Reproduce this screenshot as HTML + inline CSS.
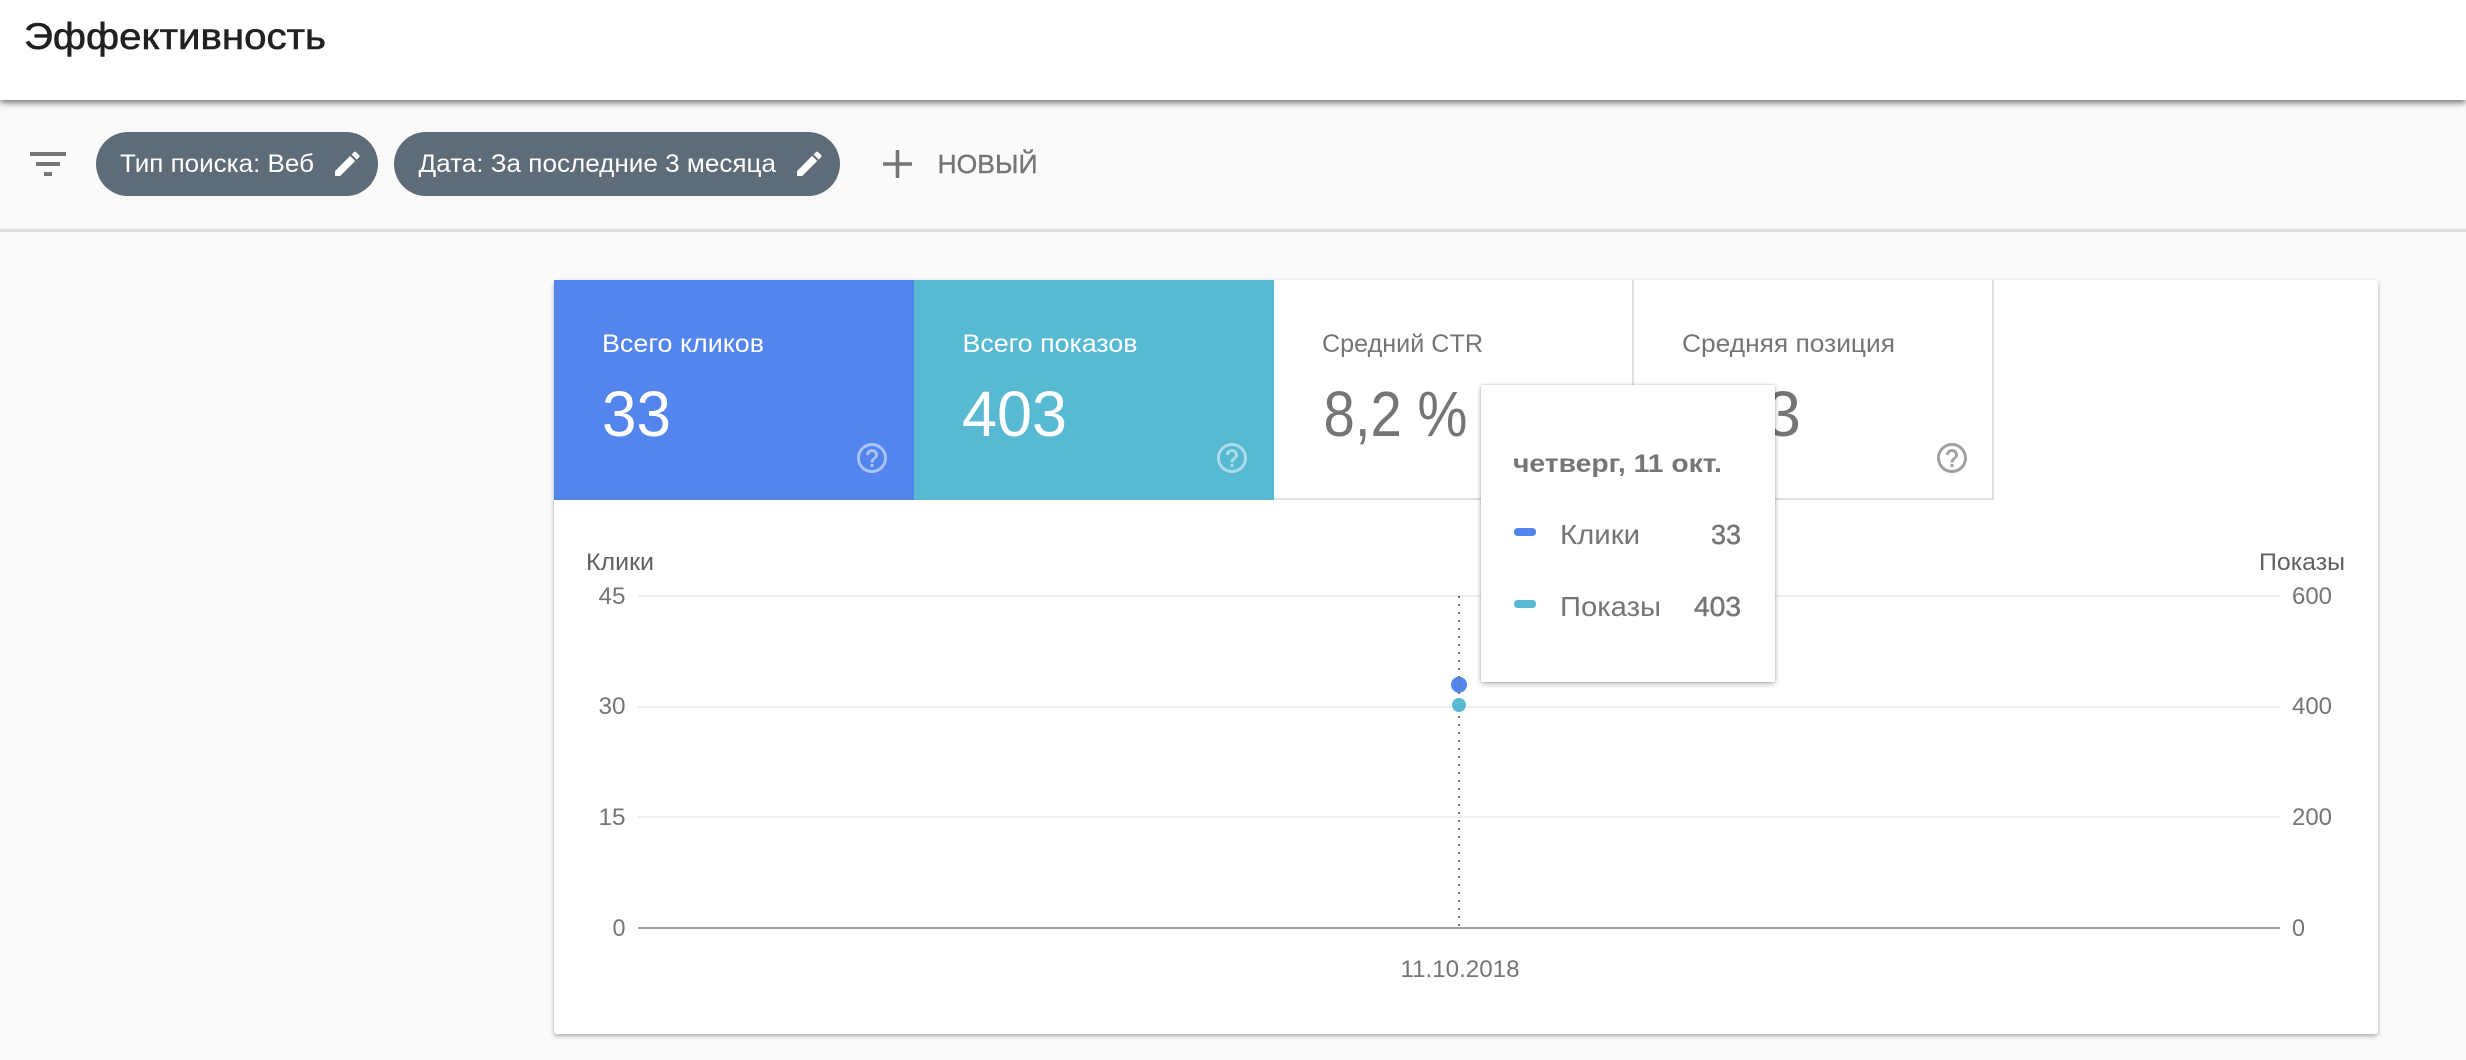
<!DOCTYPE html>
<html lang="ru">
<head>
<meta charset="utf-8">
<title>Эффективность</title>
<style>
html,body{margin:0;padding:0;width:2466px;height:1060px;overflow:hidden;background:#fafafa;font-family:"Liberation Sans",sans-serif}
.abs{position:absolute}
#hdr{left:0;top:0;width:2466px;height:100px;background:#fff;box-shadow:0 3px 6px rgba(0,0,0,.5)}
#div{left:0;top:229px;width:2466px;height:3px;background:#dedede}
.chip{background:#5d6c78;border-radius:32px;height:64px;top:132px}
#card{left:554px;top:280px;width:1824px;height:754px;background:#fff;border-radius:3px;box-shadow:0 2px 5px rgba(0,0,0,.32)}
#t1{left:554px;top:280px;width:360px;height:220px;background:#5485ec}
#t2{left:914px;top:280px;width:360px;height:220px;background:#58b9d2}
#t3{left:1274px;top:280px;width:358px;height:218px;border-right:2px solid #e0e0e0;border-bottom:2px solid #e0e0e0}
#t4{left:1634px;top:280px;width:358px;height:218px;border-right:2px solid #e0e0e0;border-bottom:2px solid #e0e0e0}
#tip{left:1481px;top:385px;width:294px;height:297px;background:#fff;border-radius:2px;box-shadow:0 2px 6px rgba(0,0,0,.28),0 0 2px rgba(0,0,0,.2)}
svg{position:absolute;left:0;top:0}
text{font-family:"Liberation Sans",sans-serif}
.g{fill:#757575}
.d{fill:#616161}
.w{fill:#fff}
</style>
</head>
<body>
<div class="abs" id="hdr"></div>
<div class="abs" id="div"></div>
<div class="abs chip" style="left:96px;width:282px"></div>
<div class="abs chip" style="left:394px;width:446px"></div>
<div class="abs" id="card"></div>
<div class="abs" id="t1"></div>
<div class="abs" id="t2"></div>
<div class="abs" id="t3"></div>
<div class="abs" id="t4"></div>

<svg width="2466" height="1060" viewBox="0 0 2466 1060" style="z-index:1">
  <!-- title -->
  <text x="24" y="49" font-size="37.500" fill="#212121" stroke="#212121" stroke-width=".6" textLength="302" lengthAdjust="spacingAndGlyphs">Эффективность</text>

  <!-- filter icon -->
  <path fill="#757575" d="M30 152h36v4H30zM36 162h24v4H36zM44 172h8v4h-8z"/>

  <!-- chips -->
  <text x="120" y="172" font-size="25" class="w" textLength="194" lengthAdjust="spacingAndGlyphs">Тип поиска: Веб</text>
  <path transform="translate(331 147.500) scale(1.36)" fill="#fff" d="M3 17.25V21h3.75L17.810 9.940l-3.750-3.750L3 17.250zM20.710 7.040c.39-.39.39-1.020 0-1.410l-2.340-2.340c-.39-.39-1.020-.39-1.410 0l-1.830 1.830 3.750 3.750 1.830-1.830z"/>
  <text x="418.500" y="172" font-size="25" class="w" textLength="357.500" lengthAdjust="spacingAndGlyphs">Дата: За последние 3 месяца</text>
  <path transform="translate(793 147.500) scale(1.36)" fill="#fff" d="M3 17.25V21h3.75L17.810 9.940l-3.750-3.750L3 17.250zM20.710 7.040c.39-.39.39-1.020 0-1.410l-2.340-2.340c-.39-.39-1.020-.39-1.410 0l-1.830 1.830 3.750 3.750 1.830-1.830z"/>

  <!-- add new -->
  <path fill="#757575" d="M895.700 150h3.600v12.200h12.700v3.600h-12.700V178h-3.600v-12.200H883v-3.600h12.700z"/>
  <text x="937.500" y="173" font-size="26" class="g" stroke="#757575" stroke-width=".4" textLength="100" lengthAdjust="spacingAndGlyphs">НОВЫЙ</text>

  <!-- tiles -->
  <text x="602" y="352" font-size="25" class="w" textLength="162" lengthAdjust="spacingAndGlyphs">Всего кликов</text>
  <text x="602" y="436" font-size="64" class="w" textLength="69" lengthAdjust="spacingAndGlyphs">33</text>
  <path transform="translate(854 440) scale(1.5)" fill="#fff" fill-opacity=".5" d="M11 18h2v-2h-2v2zm1-16C6.480 2 2 6.480 2 12s4.480 10 10 10 10-4.480 10-10S17.520 2 12 2zm0 18c-4.410 0-8-3.590-8-8s3.590-8 8-8 8 3.590 8 8-3.590 8-8 8zm0-14c-2.210 0-4 1.790-4 4h2c0-1.100.9-2 2-2s2 .9 2 2c0 2-3 1.750-3 5h2c0-2.250 3-2.500 3-5 0-2.210-1.790-4-4-4z"/>

  <text x="962.500" y="352" font-size="25" class="w" textLength="175" lengthAdjust="spacingAndGlyphs">Всего показов</text>
  <text x="962" y="436" font-size="64" class="w" textLength="105" lengthAdjust="spacingAndGlyphs">403</text>
  <path transform="translate(1214 440) scale(1.5)" fill="#fff" fill-opacity=".5" d="M11 18h2v-2h-2v2zm1-16C6.480 2 2 6.480 2 12s4.480 10 10 10 10-4.480 10-10S17.520 2 12 2zm0 18c-4.410 0-8-3.590-8-8s3.590-8 8-8 8 3.590 8 8-3.590 8-8 8zm0-14c-2.210 0-4 1.790-4 4h2c0-1.100.9-2 2-2s2 .9 2 2c0 2-3 1.750-3 5h2c0-2.250 3-2.500 3-5 0-2.210-1.790-4-4-4z"/>

  <text x="1322" y="352" font-size="25" class="g" textLength="161" lengthAdjust="spacingAndGlyphs">Средний CTR</text>
  <text x="1323.500" y="436" font-size="64" class="g" textLength="144" lengthAdjust="spacingAndGlyphs">8,2 %</text>

  <text x="1682" y="352" font-size="25" class="g" textLength="213" lengthAdjust="spacingAndGlyphs">Средняя позиция</text>
  <text x="1801" y="436" font-size="64" class="g" text-anchor="end">3</text>
  <path transform="translate(1934 440) scale(1.5)" fill="#a0a0a0" d="M11 18h2v-2h-2v2zm1-16C6.480 2 2 6.480 2 12s4.480 10 10 10 10-4.480 10-10S17.520 2 12 2zm0 18c-4.410 0-8-3.590-8-8s3.590-8 8-8 8 3.590 8 8-3.590 8-8 8zm0-14c-2.210 0-4 1.790-4 4h2c0-1.100.9-2 2-2s2 .9 2 2c0 2-3 1.750-3 5h2c0-2.250 3-2.500 3-5 0-2.210-1.790-4-4-4z"/>

  <!-- chart grid -->
  <g fill="#eeeeee">
    <rect x="638" y="595" width="1642" height="2"/>
    <rect x="638" y="706" width="1642" height="2"/>
    <rect x="638" y="816" width="1642" height="2"/>
  </g>
  <rect x="638" y="927" width="1642" height="2" fill="#9e9e9e"/>

  <!-- axis labels -->
  <text x="586" y="570" font-size="24" class="d" textLength="68" lengthAdjust="spacingAndGlyphs">Клики</text>
  <text x="2259" y="570" font-size="24" class="d" textLength="86" lengthAdjust="spacingAndGlyphs">Показы</text>
  <g font-size="24" class="g">
    <text x="598.500" y="604" textLength="27" lengthAdjust="spacingAndGlyphs">45</text>
    <text x="598.500" y="714" textLength="27" lengthAdjust="spacingAndGlyphs">30</text>
    <text x="598.500" y="825" textLength="27" lengthAdjust="spacingAndGlyphs">15</text>
    <text x="612.500" y="936" textLength="13" lengthAdjust="spacingAndGlyphs">0</text>
  </g>
  <g font-size="24" class="g">
    <text x="2292" y="604" textLength="40" lengthAdjust="spacingAndGlyphs">600</text>
    <text x="2292" y="714" textLength="40" lengthAdjust="spacingAndGlyphs">400</text>
    <text x="2292" y="825" textLength="40" lengthAdjust="spacingAndGlyphs">200</text>
    <text x="2292" y="936" textLength="13" lengthAdjust="spacingAndGlyphs">0</text>
  </g>
  <text x="1400.500" y="977" font-size="24" class="g" textLength="119" lengthAdjust="spacingAndGlyphs">11.10.2018</text>

  <!-- chart markers -->
  <circle cx="1459" cy="684.700" r="8" fill="#5485ec"/>
  <line x1="1459" y1="596" x2="1459" y2="927" stroke="#757575" stroke-width="2" stroke-dasharray="2 6"/>
  <circle cx="1459" cy="705" r="8" fill="#fff"/>
  <circle cx="1459" cy="705" r="7" fill="#58b9d2"/>
</svg>

<div class="abs" id="tip" style="z-index:2"></div>
<svg width="2466" height="1060" viewBox="0 0 2466 1060" style="z-index:3">
  <text x="1513" y="472" font-size="25" font-weight="700" class="g" textLength="209" lengthAdjust="spacingAndGlyphs">четверг, 11 окт.</text>
  <rect x="1514" y="528" width="22" height="8" rx="3.500" fill="#5485ec"/>
  <text x="1560" y="544" font-size="28" class="g" textLength="80" lengthAdjust="spacingAndGlyphs">Клики</text>
  <text x="1711" y="544" font-size="28" class="g" stroke="#757575" stroke-width=".5" textLength="30" lengthAdjust="spacingAndGlyphs">33</text>
  <rect x="1514" y="600" width="22" height="8" rx="3.500" fill="#58b9d2"/>
  <text x="1560" y="616" font-size="28" class="g" textLength="101" lengthAdjust="spacingAndGlyphs">Показы</text>
  <text x="1694" y="616" font-size="28" class="g" stroke="#757575" stroke-width=".5" textLength="47" lengthAdjust="spacingAndGlyphs">403</text>
</svg>
</body>
</html>
